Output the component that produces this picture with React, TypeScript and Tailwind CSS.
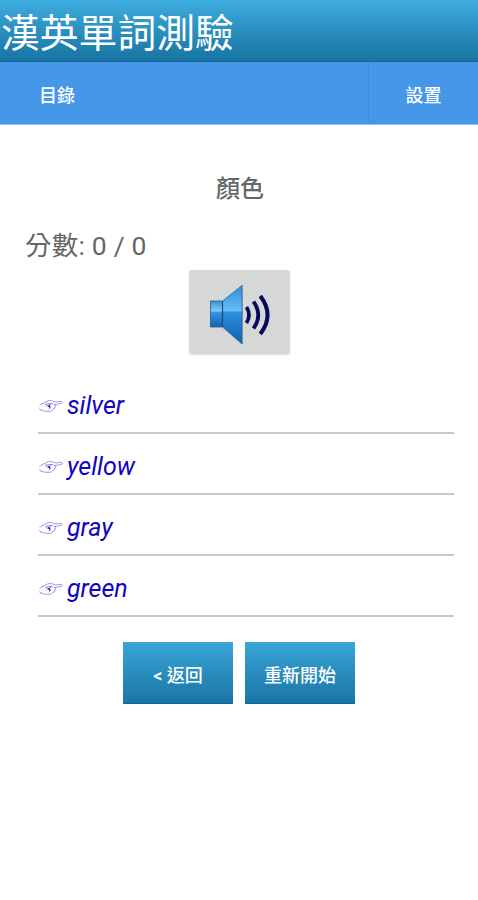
import { useState } from 'react'

const answers = ['silver', 'yellow', 'gray', 'green']

function SpeakerIcon() {
  return (
    <svg width="62" height="62" viewBox="0 0 62 62" fill="none">
      <defs>
        <linearGradient id="cone" x1="0" y1="0" x2="0" y2="1">
          <stop offset="0" stopColor="#2f8fdc" />
          <stop offset="0.43" stopColor="#68bdf5" />
          <stop offset="0.46" stopColor="#2b8fe0" />
          <stop offset="1" stopColor="#1161ad" />
        </linearGradient>
        <linearGradient id="magnet" x1="0" y1="0" x2="0" y2="1">
          <stop offset="0" stopColor="#3c91d6" />
          <stop offset="0.38" stopColor="#7ccbf8" />
          <stop offset="0.45" stopColor="#2e94e4" />
          <stop offset="1" stopColor="#1763af" />
        </linearGradient>
      </defs>
      <path d="M2.500 18h12v26h-12z" fill="url(#magnet)" stroke="#20598f" strokeWidth="0.8" />
      <path d="M14.500 18L34 2.500V61L14.500 44z" fill="url(#cone)" stroke="#28689f" strokeWidth="0.8" />
      <path d="M14.500 18v26" stroke="#164a80" strokeWidth="1.2" />
      <path d="M34.500 2v59" stroke="#6c8ca5" strokeWidth="0.8" />
      <path d="M38.500 24Q43.500 32 38.500 40" stroke="#08085c" strokeWidth="3.700" />
      <path d="M45.500 18.500Q55 32 45.500 45.500" stroke="#08085c" strokeWidth="3.800" />
      <path d="M52.300 13Q66.800 32 52.300 51" stroke="#08085c" strokeWidth="4" />
    </svg>
  )
}

function HandIcon() {
  return (
    <svg className="mt-px mr-1" width="25" height="15" viewBox="0 0 25 15" fill="none" stroke="#1005c0" strokeLinecap="round">
      <g strokeOpacity="0.5" strokeWidth="0.8">
        <path d="M4.500 4.500C7 3.500 9 1.800 11.500 1.500C14 1.300 16 2.800 18 2.900L23 2.500C25 2.600 24.500 4.300 23 4.500L16.500 5.500" />
        <path d="M16.500 5.500C18.500 6 18.200 7.800 16.500 8C17.300 9 16.500 10.200 15 10.200C14.500 11.800 13 12.300 11.500 12.300C8 12.500 4.500 12 2.500 10.800" />
        <path d="M4.500 4.500L1.800 6.500M2.500 10.800L0.800 9.200" strokeDasharray="1.500 1" />
      </g>
      <path d="M7.500 5.200L14.500 4.500M12.500 5.500L10.500 7.200L12.500 8.500L11 10M10.500 7.200L8.500 6.800" strokeOpacity="0.6" strokeWidth="0.9" />
      <path d="M10.200 5.800l2.500 1.200-1.500 2z" fill="#1005c0" stroke="none" />
    </svg>
  )
}

export default function App() {
  const [score] = useState({ correct: 0, total: 0 })

  return (
    <div className="h-[900px] w-[478px] overflow-hidden bg-white font-[Roboto,'Noto_Sans_CJK_TC',sans-serif] text-[#666666]">
      {/* Title */}
      <header className="flex h-[62px] items-center border-b border-[#12658e] bg-linear-to-b from-[#3eaddf] to-[#1674a1] pt-[7px] pl-px">
        <h1 className="text-[38.8px] leading-none whitespace-nowrap text-white">漢英單詞測驗</h1>
      </header>

      {/* Menu bar */}
      <nav className="flex h-[63px] justify-between border-b border-[#91bdf0] bg-[#4697e7] text-[18px] font-medium text-white">
        <button className="w-[114px] pt-1">目錄</button>
        <button className="w-[110px] border-l border-[#3e8edf] pt-1">設置</button>
      </nav>

      <main>
        <h2 className="mt-[46px] pl-0.5 text-center text-[24px] leading-9 font-medium">顏色</h2>
        <p className="mt-[21px] pl-[25px] text-[26.500px] leading-9 tracking-[0.2px]">
          分數: {score.correct} / {score.total}
        </p>

        <button className="mx-auto mt-[6px] flex h-[84px] w-[101px] items-center justify-center rounded-[3px] bg-[#d5d8d7] pt-1 shadow-[0_1px_2px_#00000025]">
          <SpeakerIcon />
        </button>

        <ul className="mt-[19px] mr-6 ml-[38px]">
          {answers.map((word) => (
            <li
              key={word}
              className="flex h-[61px] items-center border-b-2 border-[#c8c8c8] pt-1.5 text-[25px] text-[#1005c0] italic"
            >
              <HandIcon />
              {word}
            </li>
          ))}
        </ul>

        <div className="mt-[25px] flex justify-center gap-3 text-[18px] font-medium text-white">
          <button className="h-[62px] w-[110px] border-b border-[#12658e] bg-linear-to-b from-[#3aa6d9] to-[#1876a4] pt-1.5">
            &lt; 返回
          </button>
          <button className="h-[62px] w-[110px] border-b border-[#12658e] bg-linear-to-b from-[#3aa6d9] to-[#1876a4] pt-1.5">
            重新開始
          </button>
        </div>
      </main>
    </div>
  )
}
